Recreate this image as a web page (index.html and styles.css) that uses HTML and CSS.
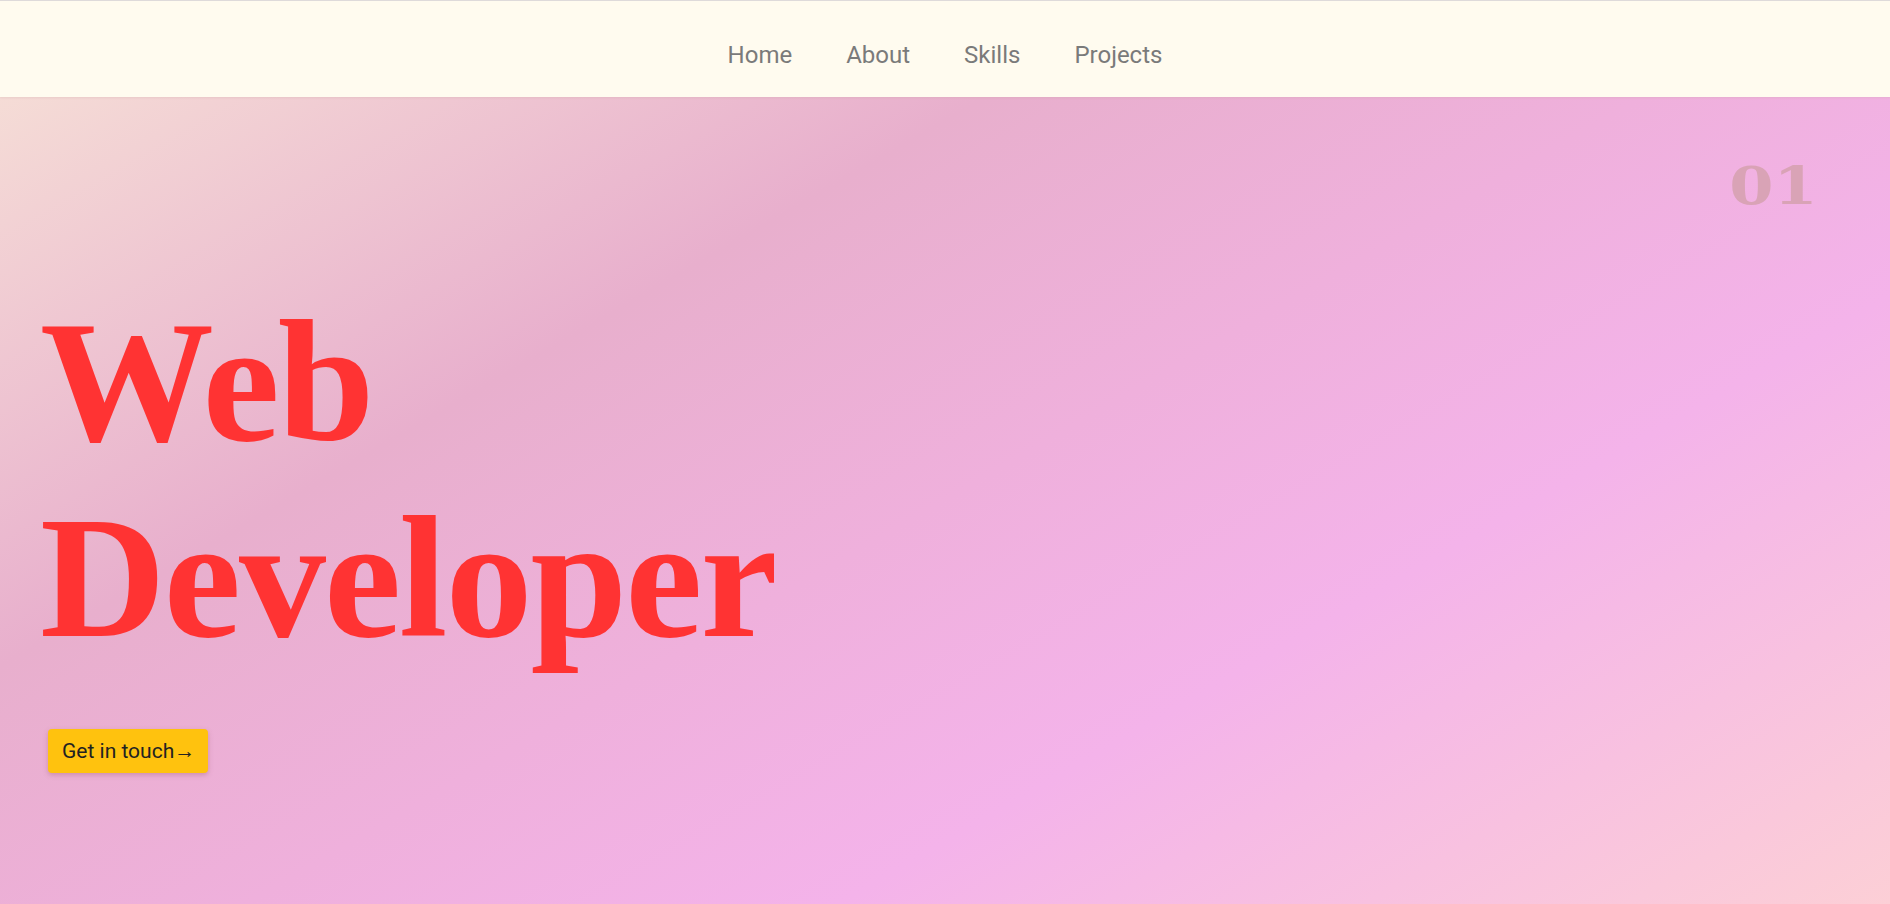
FILE: index.html
```html
<!DOCTYPE html>
<html lang="en">
<head>
<meta charset="utf-8">
<title>Web Developer</title>
<link rel="stylesheet" href="styles.css">
</head>
<body>
<header class="topbar">
  <nav class="nav">
    <a class="nav-link" href="#">Home</a>
    <a class="nav-link" href="#">About</a>
    <a class="nav-link" href="#">Skills</a>
    <a class="nav-link" href="#">Projects</a>
  </nav>
</header>
<main class="hero">
  <div class="hero-index">01</div>
  <h1 class="hero-title">Web<br>Developer</h1>
  <a class="cta" href="#">Get in touch&#8594;</a>
</main>
</body>
</html>
```

FILE: styles.css
```css
html, body {
  margin: 0;
  padding: 0;
  height: 100%;
}
body {
  font-family: Roboto, "Liberation Sans", sans-serif;
  display: flex;
  flex-direction: column;
  overflow: hidden;
}
.topbar {
  background: #fffbef;
  border-top: 1px solid #dedada;
  height: 96px;
  display: flex;
  align-items: center;
  justify-content: center;
  flex-shrink: 0;
  box-shadow: 0 1px 2px rgba(200, 160, 160, 0.25);
  position: relative;
  z-index: 1;
}
.nav {
  display: flex;
  gap: 54px;
  margin-right: 0;
  margin-top: 12px;
}
.nav-link {
  color: #7a7a7a;
  text-decoration: none;
  font-size: 24px;
}
.hero {
  flex: 1;
  position: relative;
  background: linear-gradient(150deg, #f5dcd6 0%, #e8afcd 30%, #efb0dc 50%, #f4b3ea 68%, #fccfd6 100%);
  padding: 187px 0 0 40px;
}
.hero-index {
  position: absolute;
  top: 57px;
  right: 72px;
  font-family: "DejaVu Serif", serif;
  font-weight: bold;
  font-size: 53px;
  color: #d9a3b6;
  transform: scaleX(1.2);
  transform-origin: right center;
}
.hero-title {
  margin: 0;
  font-family: "Liberation Serif", serif;
  font-weight: bold;
  font-size: 174px;
  line-height: 196px;
  color: #ff3333;
  letter-spacing: -2px;
}
.cta {
  display: inline-block;
  margin-top: 53px;
  margin-left: 8px;
  background: #ffc20e;
  color: #222;
  text-decoration: none;
  font-size: 21px;
  padding: 10px 13px 10px 14px;
  border-radius: 4px;
  box-shadow: 0 2px 5px rgba(150, 80, 100, 0.35);
}
```
